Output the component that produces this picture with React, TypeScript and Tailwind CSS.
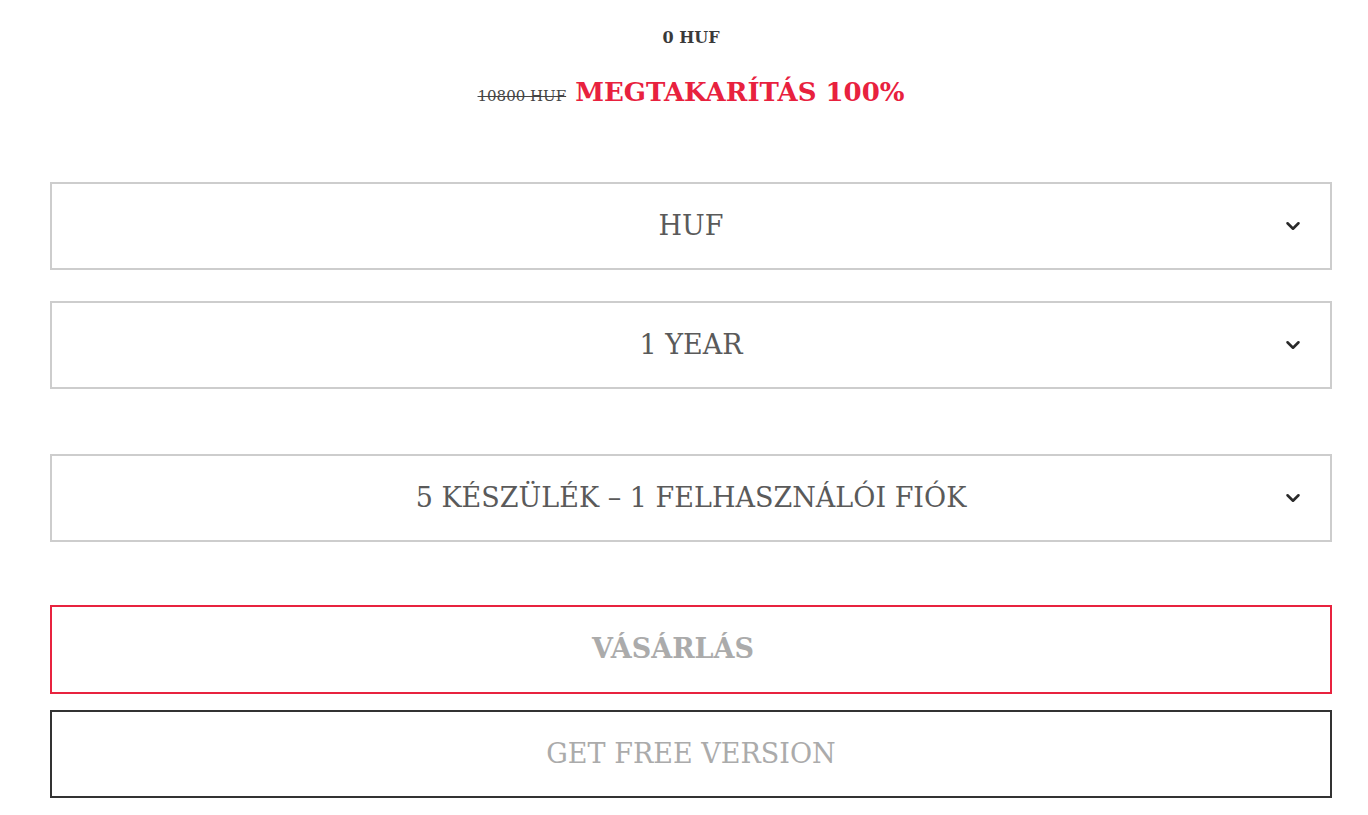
import React from "react";
import { ChevronDown } from "lucide-react";

const slab = { fontFamily: '"DejaVu Serif", serif' };

const SelectBox = ({ label }: { label: string }) => (
  <div className="relative flex h-[88px] items-center justify-center border-2 border-[#cdcdcd] bg-white">
    <span className="text-[27px] uppercase text-[#5a5a5a]">{label}</span>
    <ChevronDown
      size={22}
      strokeWidth={2.8}
      className="absolute right-[26px] top-1/2 -translate-y-1/2 text-[#2a2a2a]"
    />
  </div>
);

export default function App() {
  return (
    <div className="min-h-[815px] bg-white" style={slab}>
      <div className="ml-[50px] w-[1282px] pt-[27px]">
        <div className="text-center text-[16px] font-bold leading-[22px] text-[#3a3a3a]">0 HUF</div>
        <div className="mt-[24px] flex items-baseline justify-center gap-[9px]">
          <span className="text-[15px] text-[#444] line-through">10800 HUF</span>
          <span className="text-[26px] font-bold text-[#e8213e]">MEGTAKARÍTÁS 100%</span>
        </div>

        <div className="mt-[70px] flex flex-col">
          <SelectBox label="HUF" />
          <div className="mt-[31px]">
            <SelectBox label="1 Year" />
          </div>
          <div className="mt-[65px]">
            <SelectBox label="5 készülék – 1 felhasználói fiók" />
          </div>
        </div>

        <button className="mt-[63px] flex h-[89px] w-full items-center justify-center border-2 border-[#e8233f] bg-white pr-[36px] text-[27px] font-bold text-[#ababab]">
          VÁSÁRLÁS
        </button>
        <button className="mt-[16px] flex h-[88px] w-full items-center justify-center border-2 border-[#333] bg-white text-[27px] text-[#ababab]">
          GET FREE VERSION
        </button>
      </div>
    </div>
  );
}
